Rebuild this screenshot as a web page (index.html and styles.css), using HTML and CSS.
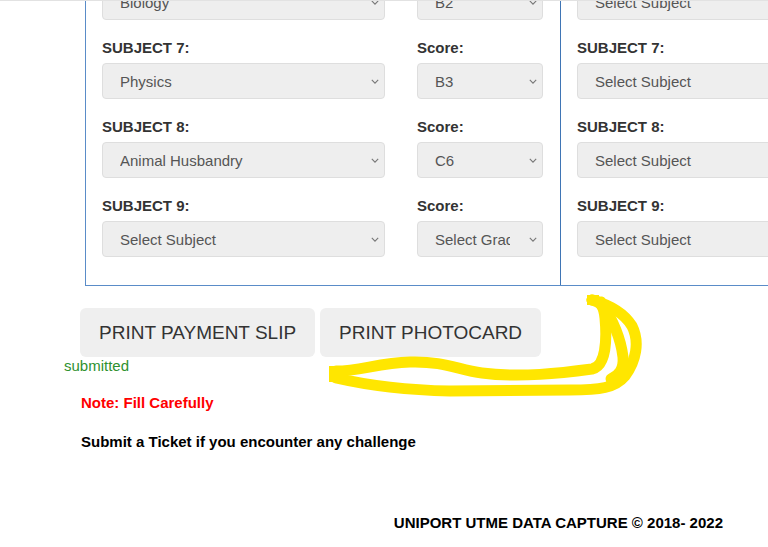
FILE: index.html
```html
<!DOCTYPE html>
<html>
<head>
<meta charset="utf-8">
<link rel="stylesheet" href="styles.css">
</head>
<body>
<div class="topline"></div>
<div class="panel">
  <div class="col col-left">
    <div class="row">
      <div class="field subj"><label>SUBJECT 6:</label><div class="sel"><select><option>Biology</option></select><svg class="chev" viewBox="0 0 10 6"><path d="M1 1 L5 5 L9 1"/></svg></div></div>
      <div class="field score"><label>Score:</label><div class="sel"><select><option>B2</option></select><svg class="chev" viewBox="0 0 10 6"><path d="M1 1 L5 5 L9 1"/></svg></div></div>
    </div>
    <div class="row">
      <div class="field subj"><label>SUBJECT 7:</label><div class="sel"><select><option>Physics</option></select><svg class="chev" viewBox="0 0 10 6"><path d="M1 1 L5 5 L9 1"/></svg></div></div>
      <div class="field score"><label>Score:</label><div class="sel"><select><option>B3</option></select><svg class="chev" viewBox="0 0 10 6"><path d="M1 1 L5 5 L9 1"/></svg></div></div>
    </div>
    <div class="row">
      <div class="field subj"><label>SUBJECT 8:</label><div class="sel"><select><option>Animal Husbandry</option></select><svg class="chev" viewBox="0 0 10 6"><path d="M1 1 L5 5 L9 1"/></svg></div></div>
      <div class="field score"><label>Score:</label><div class="sel"><select><option>C6</option></select><svg class="chev" viewBox="0 0 10 6"><path d="M1 1 L5 5 L9 1"/></svg></div></div>
    </div>
    <div class="row">
      <div class="field subj"><label>SUBJECT 9:</label><div class="sel"><select><option>Select Subject</option></select><svg class="chev" viewBox="0 0 10 6"><path d="M1 1 L5 5 L9 1"/></svg></div></div>
      <div class="field score"><label>Score:</label><div class="sel"><select class="clip"><option>Select Grade</option></select><svg class="chev" viewBox="0 0 10 6"><path d="M1 1 L5 5 L9 1"/></svg></div></div>
    </div>
  </div>
  <div class="col col-right">
    <div class="row">
      <div class="field wide"><label>SUBJECT 6:</label><div class="sel"><select><option>Select Subject</option></select></div></div>
    </div>
    <div class="row">
      <div class="field wide"><label>SUBJECT 7:</label><div class="sel"><select><option>Select Subject</option></select></div></div>
    </div>
    <div class="row">
      <div class="field wide"><label>SUBJECT 8:</label><div class="sel"><select><option>Select Subject</option></select></div></div>
    </div>
    <div class="row">
      <div class="field wide"><label>SUBJECT 9:</label><div class="sel"><select><option>Select Subject</option></select></div></div>
    </div>
  </div>
</div>

<div class="actions">
  <button class="btn">PRINT PAYMENT SLIP</button>
  <button class="btn">PRINT PHOTOCARD</button>
</div>
<div class="status">submitted</div>
<p class="note">Note: Fill Carefully</p>
<p class="ticket">Submit a Ticket if you encounter any challenge</p>
<footer class="footer">UNIPORT UTME DATA CAPTURE © 2018- 2022</footer>

<svg class="scribble" viewBox="0 0 768 547" width="768" height="547">
  <g fill="none" stroke="#ffe600" stroke-width="11" stroke-linecap="round" stroke-linejoin="round">
    <path d="M336,371 C360,371 378,363 410,362 C445,361 458,370 482,373 C520,378 562,373 592,369 C606,366 607,340 605,318 C604,306 600,301 592,300"/>
    <path d="M592,300 C610,305 624,313 632,326 C640,342 636,361 625,376 C615,388 600,390 570,390 L450,391 C400,390 362,384 336,378"/>
    <path d="M601,302 C613,320 621,340 623,357 C624,369 619,375 611,379"/>
  </g>
  <rect x="329" y="366" width="12" height="16" fill="#ffe600"/>
  <rect x="587" y="295" width="12" height="10" fill="#ffe600"/>
</svg>
</body>
</html>
```

FILE: styles.css
```css
html, body {
  margin: 0;
  padding: 0;
}
body {
  width: 768px;
  height: 547px;
  overflow: hidden;
  position: relative;
  font-family: "Liberation Sans", Arial, sans-serif;
  color: #333;
  background: #fff;
}
.topline {
  height: 1px;
  background: #e2e2e2;
  position: relative;
  z-index: 2;
}
.panel {
  margin: -41px 0 0 85px;
  display: flex;
  border-left: 1px solid #5a8cc8;
  border-bottom: 1px solid #5a8cc8;
  width: 800px;
}
.col {
  padding: 0 0 28px 16px;
}
.col-left {
  width: 458px;
  flex: none;
}
.col-right {
  border-left: 1px solid #3f75b5;
  flex: 1;
}
.row {
  display: flex;
  gap: 32px;
  margin-bottom: 19px;
}
.row:last-child {
  margin-bottom: 0;
}
.field label {
  display: block;
  font-weight: bold;
  font-size: 15px;
  line-height: 17px;
  margin-bottom: 7px;
  color: #333;
}
.subj { width: 283px; }
.score { width: 126px; }
.wide { width: 300px; }
.sel {
  position: relative;
}
.sel select {
  appearance: none;
  -webkit-appearance: none;
  display: block;
  width: 100%;
  height: 36px;
  box-sizing: border-box;
  padding: 0 26px 0 17px;
  border: 1px solid #dedede;
  border-radius: 4px;
  background: #eeeeee;
  color: #555;
  font-family: "Liberation Sans", Arial, sans-serif;
  font-size: 15px;
  outline: none;
}
.sel select.clip {
  padding-right: 32px;
  text-overflow: clip;
}
.chev {
  position: absolute;
  right: 6px;
  top: 16px;
  width: 8px;
  height: 5px;
  fill: none;
  stroke: #777;
  stroke-width: 1.4;
}
.actions {
  display: flex;
  gap: 5px;
  margin: 22px 0 0 80px;
}
.btn {
  height: 49px;
  padding: 0 19px;
  border: none;
  border-radius: 6px;
  background: #efefef;
  color: #333;
  font-family: "Liberation Sans", Arial, sans-serif;
  font-size: 19px;
}
.status {
  margin-left: 64px;
  font-size: 15px;
  line-height: 17px;
  color: #2f912f;
}
.note {
  margin: 20px 0 0 81px;
  font-size: 15px;
  line-height: 17px;
  font-weight: bold;
  color: #ff0000;
}
.ticket {
  margin: 22px 0 0 81px;
  font-size: 15px;
  line-height: 17px;
  font-weight: bold;
  color: #000;
}
.footer {
  margin-top: 64px;
  padding-right: 45px;
  text-align: right;
  font-size: 15px;
  line-height: 17px;
  font-weight: bold;
  color: #000;
}
.scribble {
  position: absolute;
  left: 0;
  top: 0;
  pointer-events: none;
}
```
